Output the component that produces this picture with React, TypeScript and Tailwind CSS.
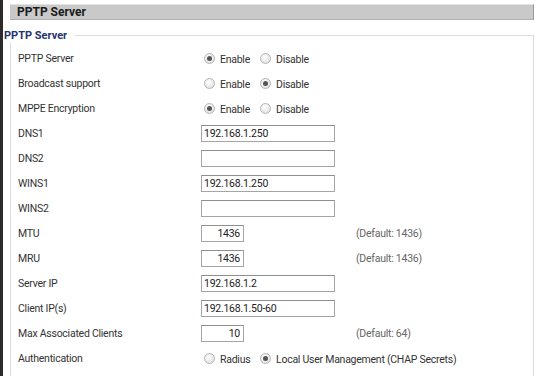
import React from "react";

const font = { fontFamily: 'Roboto, "Noto Sans", sans-serif' };

function Radio({ checked }: { checked?: boolean }) {
  return (
    <span className="inline-flex h-[11px] w-[11px] shrink-0 items-center justify-center rounded-full border border-[#b5b5b5] bg-[radial-gradient(circle_at_40%_35%,#ffffff,#dadada)]">
      {checked && <span className="h-[5px] w-[5px] rounded-full bg-[#555]" />}
    </span>
  );
}

function RadioPair({ a, b, first }: { a: string; b: string; first: boolean }) {
  return (
    <div className="flex items-center whitespace-nowrap">
      <span className="ml-[3px] flex shrink-0"><Radio checked={first} /></span>
      <span className="ml-[5px] w-[40px] shrink-0 pt-[2px]">{a}</span>
      <Radio checked={!first} />
      <span className="ml-[5px] shrink-0 pt-[2px]">{b}</span>
    </div>
  );
}

function TextBox({ value, small }: { value: string; small?: boolean }) {
  return (
    <div
      className={
        "flex h-[17px] items-center border border-[#a5a5a5] border-t-[#8f8f8f] bg-white text-[#222] " +
        (small ? "w-[43px] justify-end pr-[3px]" : "w-[134px] pl-[2px]")
      }
    >
      {value}
    </div>
  );
}

type Row = { label: string; node: React.ReactNode; note?: string };

export default function App() {
  const rows: Row[] = [
    { label: "PPTP Server", node: <RadioPair a="Enable" b="Disable" first={true} /> },
    { label: "Broadcast support", node: <RadioPair a="Enable" b="Disable" first={false} /> },
    { label: "MPPE Encryption", node: <RadioPair a="Enable" b="Disable" first={true} /> },
    { label: "DNS1", node: <TextBox value="192.168.1.250" /> },
    { label: "DNS2", node: <TextBox value="" /> },
    { label: "WINS1", node: <TextBox value="192.168.1.250" /> },
    { label: "WINS2", node: <TextBox value="" /> },
    { label: "MTU", node: <TextBox value="1436" small />, note: "(Default: 1436)" },
    { label: "MRU", node: <TextBox value="1436" small />, note: "(Default: 1436)" },
    { label: "Server IP", node: <TextBox value="192.168.1.2" /> },
    { label: "Client IP(s)", node: <TextBox value="192.168.1.50-60" /> },
    { label: "Max Associated Clients", node: <TextBox value="10" small />, note: "(Default: 64)" },
    {
      label: "Authentication",
      node: (
        <div className="flex items-center whitespace-nowrap">
          <span className="ml-[3px] flex shrink-0"><Radio /></span>
          <span className="ml-[5px] w-[40px] shrink-0 pt-[2px]">Radius</span>
          <Radio checked />
          <span className="ml-[5px] shrink-0 pt-[2px]">Local User Management (CHAP Secrets)</span>
        </div>
      ),
    },
  ];

  return (
    <div className="h-[376px] w-[540px] overflow-hidden bg-white" style={font}>
      <div className="flex h-full border-l-[3px] border-[#2b2b2b]">
        <div className="flex w-full flex-col">
          <div className="ml-[7px] mt-[4px] flex h-[16px] w-[524px] items-center border-t border-r border-b border-t-[#e2e2e2] border-r-[#9a9a9a] border-b-[#b0b0b0] bg-[#c9c9c9] pl-[7px] text-[12px] font-bold text-[#1b1b1b]">
            PPTP Server
          </div>
          <div className="mt-[9px] flex h-[14px] items-end">
            <span className="ml-[1px] pr-[8px] text-[11px] font-bold leading-[14px] text-[#1f3470]">PPTP Server</span>
            <div className="mb-[6px] mr-[6px] h-[8px] flex-1 translate-y-[6px] self-end border-t border-r border-[#dcdcdc]" />
          </div>
          <div className="ml-[7px] w-[524px] flex-1 border-l border-r border-[#dcdcdc] pt-[3px] text-[10.5px] tracking-[-0.25px] text-[#333]">
            {rows.map((r) => (
              <div key={r.label} className="flex h-[25px] items-center">
                <span className="w-[190px] shrink-0 pl-[7px]">{r.label}</span>
                <div className="w-[155px] shrink-0">{r.node}</div>
                {r.note && <span className="text-[#666]">{r.note}</span>}
              </div>
            ))}
          </div>
        </div>
      </div>
    </div>
  );
}
